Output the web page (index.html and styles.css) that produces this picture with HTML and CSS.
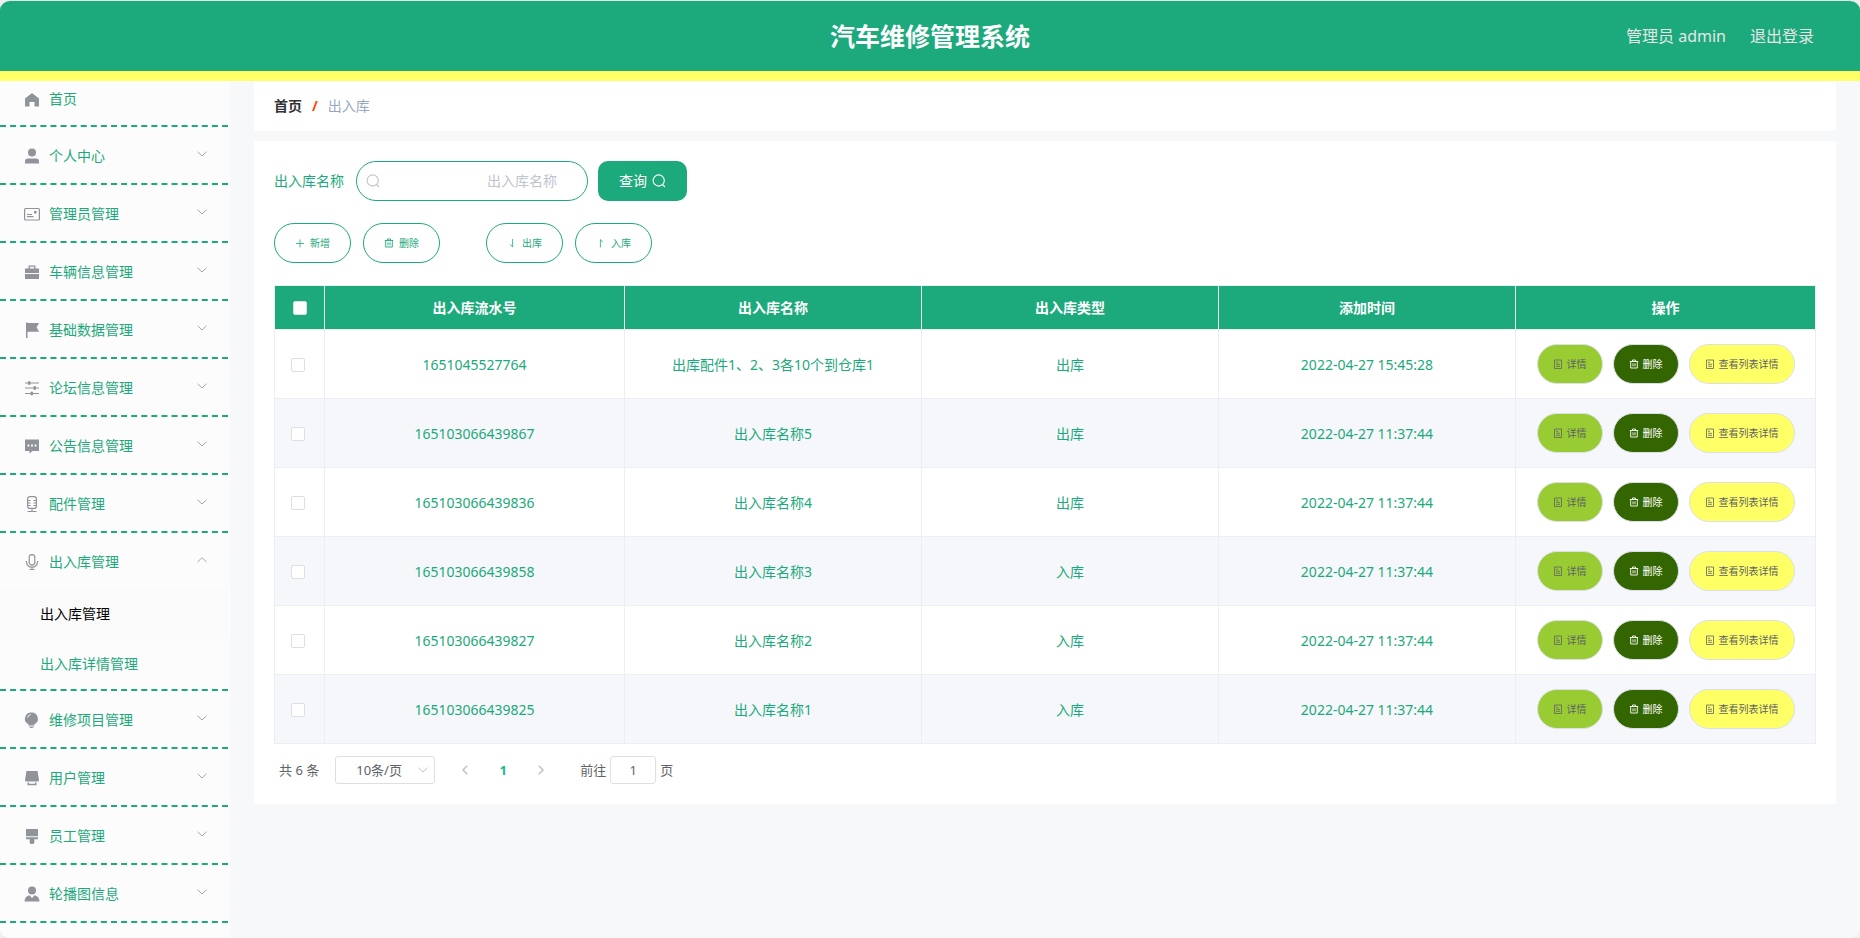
FILE: index.html
```html
<!DOCTYPE html>
<html lang="zh-CN">
<head>
<meta charset="utf-8">
<title>汽车维修管理系统</title>
<link rel="stylesheet" href="styles.css">
</head>
<body>
<svg class="sprite" aria-hidden="true">
  <symbol id="i-home" viewBox="0 0 18 18"><path fill="currentColor" d="M9 2l7 5.500v8h-4.500V11h-5v4.500H2v-8z"/></symbol>
  <symbol id="i-user" viewBox="0 0 18 18"><circle cx="9" cy="5.500" r="4" fill="currentColor"/><path fill="currentColor" d="M2 16.500v-2q0-3 3-3h8q3 0 3 3v2z"/></symbol>
  <symbol id="i-card" viewBox="0 0 18 18"><rect x="1.600" y="3.500" width="14.800" height="11.500" rx="1" fill="none" stroke="currentColor" stroke-width="1.200"/><path stroke="currentColor" stroke-width="1.200" d="M4 9.500h5M4 11.700h6.500"/><path fill="currentColor" d="M11 6h2.500v2.500H11z"/></symbol>
  <symbol id="i-case" viewBox="0 0 18 18"><path fill="currentColor" d="M2 5.500h3.500V2.500h7v3H16V10H2zM6.800 3.800v1.700h4.400V3.800zM2 11h14v5H2z" fill-rule="evenodd"/></symbol>
  <symbol id="i-flag" viewBox="0 0 18 18"><path fill="currentColor" d="M3 1.500h1.500V2H16l-2.300 4.200L16 10.800H4.500V17H3z"/></symbol>
  <symbol id="i-sliders" viewBox="0 0 18 18"><path fill="none" stroke="currentColor" stroke-width="1.200" d="M2 4h14M2 9h14M2 14.500h14"/><path fill="currentColor" d="M5 2.200h2.500v3.600H5zM10.500 7.200H13v3.600h-2.500zM7.500 12.700H10v3.600H7.500z"/></symbol>
  <symbol id="i-chat" viewBox="0 0 18 18"><path fill="currentColor" fill-rule="evenodd" d="M2 2.500h14v11.500H9.500l-3 2.500V14H2zM4.500 7.500v2h1.800v-2zM8.100 7.500v2h1.800v-2zM11.700 7.500v2h1.800v-2z"/></symbol>
  <symbol id="i-mic2" viewBox="0 0 18 18"><rect x="4.600" y="1.600" width="8.800" height="11.800" rx="2.200" fill="none" stroke="currentColor" stroke-width="1.200"/><path fill="none" stroke="currentColor" stroke-width="1.100" d="M4.600 5.500h3M10.400 5.500h3M4.600 8h3M10.400 8h3M4.600 10.500h3M10.400 10.500h3M9 13.500v3M4.500 16.500h9"/></symbol>
  <symbol id="i-mic" viewBox="0 0 18 18"><rect x="6.200" y="1.600" width="5.600" height="10.500" rx="2.800" fill="none" stroke="currentColor" stroke-width="1.200"/><path fill="none" stroke="currentColor" stroke-width="1.200" d="M3.500 8v1q.5 5.200 5.500 5.200T14.500 9V8M9 14v2.500M6.500 16.500h5"/></symbol>
  <symbol id="i-bulb" viewBox="0 0 18 18"><path fill="currentColor" d="M8.300 1.500A6.200 6.200 0 0 0 5.500 13.300V14.500h5.800v-1.200A6.200 6.200 0 0 0 8.300 1.500zM6 15.500h5v.7H10L9.500 17h-2L7 16.200H6z"/><path fill="none" stroke="#fcfcfc" d="M4.500 6.500q.8-2.300 3-3"/></symbol>
  <symbol id="i-goods" viewBox="0 0 18 18"><path fill="currentColor" d="M3.500 2h11L16 11q0 1.500-1.500 1.500h-11Q2 12.500 2 11zM4.500 13.500H6v1.300h6v-1.300h1.500v2.700h-9z"/></symbol>
  <symbol id="i-brush" viewBox="0 0 18 18"><path fill="currentColor" d="M3 2h12v7.200H3zM3 10.300h12v2H11.300V15.500q0 1.500-2.300 1.500t-2.300-1.500v-3.200H3z"/></symbol>
  <symbol id="i-custom" viewBox="0 0 18 18"><circle cx="9" cy="5.500" r="4" fill="currentColor"/><path fill="currentColor" d="M1.500 16.500q.3-5.500 5-6.300L9 13l2.500-2.800q4.700.8 5 6.300z"/></symbol>
  <symbol id="i-down" viewBox="0 0 12 12"><path fill="none" stroke="currentColor" d="M1.500 3.700L6 8l4.500-4.300"/></symbol>
  <symbol id="i-up" viewBox="0 0 12 12"><path fill="none" stroke="currentColor" d="M1.500 8L6 3.700 10.500 8"/></symbol>
  <symbol id="i-search" viewBox="0 0 14 14"><circle cx="6.700" cy="6.500" r="5.600" fill="none" stroke="currentColor" stroke-width="1.100"/><path stroke="currentColor" stroke-width="1.100" d="M10.500 10.500l2.500 2.500"/></symbol>
  <symbol id="i-plus" viewBox="0 0 10 10"><path stroke="currentColor" stroke-width=".8" d="M1 5.500h8M5 1.500v8"/></symbol>
  <symbol id="i-trash" viewBox="0 0 10 10"><path fill="none" stroke="currentColor" stroke-width=".9" d="M.8 2.500h8.400M3.500 2.500v-1.500h3v1.500M1.700 2.500v6.500h6.600V2.500M4 4.300v3M6 4.300v3"/></symbol>
  <symbol id="i-doc" viewBox="0 0 10 10"><path fill="none" stroke="currentColor" stroke-width=".8" d="M1.500 1h7v8.500h-7zM3 3.300h2M3 5.300h4M3 7.300h4"/></symbol>
  <symbol id="i-out" viewBox="0 0 10 10"><path fill="none" stroke="currentColor" stroke-width=".8" d="M5.600 1v8L3.200 6.300"/></symbol>
  <symbol id="i-in" viewBox="0 0 10 10"><path fill="none" stroke="currentColor" stroke-width=".8" d="M4.400 9.500v-8L6.800 4.200"/></symbol>
  <symbol id="i-left" viewBox="0 0 12 12"><path fill="none" stroke="currentColor" stroke-width="1.600" d="M8.300 1.800L4 6l4.300 4.200"/></symbol>
  <symbol id="i-right" viewBox="0 0 12 12"><path fill="none" stroke="currentColor" stroke-width="1.600" d="M3.700 1.800L8 6l-4.300 4.200"/></symbol>
</svg>

<div class="app">
  <header class="topbar">
    <h1 class="title">汽车维修管理系统</h1>
    <div class="account"><span>管理员 admin</span><a href="#">退出登录</a></div>
  </header>

  <div class="body">
    <nav class="sidebar">
      <ul class="menu">
        <li class="group first"><a class="item" href="#"><svg class="ico"><use href="#i-home"/></svg><span>首页</span></a></li>
        <li class="group"><a class="item" href="#"><svg class="ico"><use href="#i-user"/></svg><span>个人中心</span><svg class="arrow"><use href="#i-down"/></svg></a></li>
        <li class="group"><a class="item" href="#"><svg class="ico"><use href="#i-card"/></svg><span>管理员管理</span><svg class="arrow"><use href="#i-down"/></svg></a></li>
        <li class="group"><a class="item" href="#"><svg class="ico"><use href="#i-case"/></svg><span>车辆信息管理</span><svg class="arrow"><use href="#i-down"/></svg></a></li>
        <li class="group"><a class="item" href="#"><svg class="ico"><use href="#i-flag"/></svg><span>基础数据管理</span><svg class="arrow"><use href="#i-down"/></svg></a></li>
        <li class="group"><a class="item" href="#"><svg class="ico"><use href="#i-sliders"/></svg><span>论坛信息管理</span><svg class="arrow"><use href="#i-down"/></svg></a></li>
        <li class="group"><a class="item" href="#"><svg class="ico"><use href="#i-chat"/></svg><span>公告信息管理</span><svg class="arrow"><use href="#i-down"/></svg></a></li>
        <li class="group"><a class="item" href="#"><svg class="ico"><use href="#i-mic2"/></svg><span>配件管理</span><svg class="arrow"><use href="#i-down"/></svg></a></li>
        <li class="group"><a class="item" href="#"><svg class="ico"><use href="#i-mic"/></svg><span>出入库管理</span><svg class="arrow"><use href="#i-up"/></svg></a>
          <ul class="submenu">
            <li><a class="subitem active" href="#">出入库管理</a></li>
            <li><a class="subitem" href="#">出入库详情管理</a></li>
          </ul>
        </li>
        <li class="group"><a class="item" href="#"><svg class="ico"><use href="#i-bulb"/></svg><span>维修项目管理</span><svg class="arrow"><use href="#i-down"/></svg></a></li>
        <li class="group"><a class="item" href="#"><svg class="ico"><use href="#i-goods"/></svg><span>用户管理</span><svg class="arrow"><use href="#i-down"/></svg></a></li>
        <li class="group"><a class="item" href="#"><svg class="ico"><use href="#i-brush"/></svg><span>员工管理</span><svg class="arrow"><use href="#i-down"/></svg></a></li>
        <li class="group"><a class="item" href="#"><svg class="ico"><use href="#i-custom"/></svg><span>轮播图信息</span><svg class="arrow"><use href="#i-down"/></svg></a></li>
      </ul>
    </nav>

    <main class="main">
      <div class="crumbs"><a class="crumb-home" href="#">首页</a><span class="slash">/</span><span class="crumb-here">出入库</span></div>

      <section class="card">
        <form class="search">
          <label for="name">出入库名称</label>
          <div class="field"><svg class="field-ico"><use href="#i-search"/></svg><input id="name" class="text" type="text" placeholder="出入库名称"></div>
          <button class="query" type="button">查询<svg class="s14"><use href="#i-search"/></svg></button>
        </form>

        <div class="tools">
          <div class="toolset">
            <button class="tool" type="button"><svg class="s10"><use href="#i-plus"/></svg>新增</button>
            <button class="tool" type="button"><svg class="s10"><use href="#i-trash"/></svg>删除</button>
          </div>
          <div class="toolset">
            <button class="tool" type="button"><svg class="s10"><use href="#i-out"/></svg>出库</button>
            <button class="tool" type="button"><svg class="s10"><use href="#i-in"/></svg>入库</button>
          </div>
        </div>

        <table class="grid">
          <colgroup><col class="c-check"><col class="c-wide"><col><col><col><col class="c-wide"></colgroup>
          <thead>
            <tr><th><input class="check" type="checkbox" aria-label="全选"></th><th>出入库流水号</th><th>出入库名称</th><th>出入库类型</th><th>添加时间</th><th>操作</th></tr>
          </thead>
          <tbody>
            <tr><td class="pick"><input class="check" type="checkbox" aria-label="选择"></td><td>1651045527764</td><td>出库配件1、2、3各10个到仓库1</td><td>出库</td><td>2022-04-27 15:45:28</td><td class="act"><div class="ops"><button class="op detail" type="button"><svg class="s10"><use href="#i-doc"/></svg>详情</button><button class="op remove" type="button"><svg class="s10"><use href="#i-trash"/></svg>删除</button><button class="op list" type="button"><svg class="s10"><use href="#i-doc"/></svg>查看列表详情</button></div></td></tr>
            <tr><td class="pick"><input class="check" type="checkbox" aria-label="选择"></td><td>165103066439867</td><td>出入库名称5</td><td>出库</td><td>2022-04-27 11:37:44</td><td class="act"><div class="ops"><button class="op detail" type="button"><svg class="s10"><use href="#i-doc"/></svg>详情</button><button class="op remove" type="button"><svg class="s10"><use href="#i-trash"/></svg>删除</button><button class="op list" type="button"><svg class="s10"><use href="#i-doc"/></svg>查看列表详情</button></div></td></tr>
            <tr><td class="pick"><input class="check" type="checkbox" aria-label="选择"></td><td>165103066439836</td><td>出入库名称4</td><td>出库</td><td>2022-04-27 11:37:44</td><td class="act"><div class="ops"><button class="op detail" type="button"><svg class="s10"><use href="#i-doc"/></svg>详情</button><button class="op remove" type="button"><svg class="s10"><use href="#i-trash"/></svg>删除</button><button class="op list" type="button"><svg class="s10"><use href="#i-doc"/></svg>查看列表详情</button></div></td></tr>
            <tr><td class="pick"><input class="check" type="checkbox" aria-label="选择"></td><td>165103066439858</td><td>出入库名称3</td><td>入库</td><td>2022-04-27 11:37:44</td><td class="act"><div class="ops"><button class="op detail" type="button"><svg class="s10"><use href="#i-doc"/></svg>详情</button><button class="op remove" type="button"><svg class="s10"><use href="#i-trash"/></svg>删除</button><button class="op list" type="button"><svg class="s10"><use href="#i-doc"/></svg>查看列表详情</button></div></td></tr>
            <tr><td class="pick"><input class="check" type="checkbox" aria-label="选择"></td><td>165103066439827</td><td>出入库名称2</td><td>入库</td><td>2022-04-27 11:37:44</td><td class="act"><div class="ops"><button class="op detail" type="button"><svg class="s10"><use href="#i-doc"/></svg>详情</button><button class="op remove" type="button"><svg class="s10"><use href="#i-trash"/></svg>删除</button><button class="op list" type="button"><svg class="s10"><use href="#i-doc"/></svg>查看列表详情</button></div></td></tr>
            <tr><td class="pick"><input class="check" type="checkbox" aria-label="选择"></td><td>165103066439825</td><td>出入库名称1</td><td>入库</td><td>2022-04-27 11:37:44</td><td class="act"><div class="ops"><button class="op detail" type="button"><svg class="s10"><use href="#i-doc"/></svg>详情</button><button class="op remove" type="button"><svg class="s10"><use href="#i-trash"/></svg>删除</button><button class="op list" type="button"><svg class="s10"><use href="#i-doc"/></svg>查看列表详情</button></div></td></tr>
          </tbody>
        </table>

        <div class="pager">
          <span>共 6 条</span>
          <div class="size"><select class="size-select" aria-label="每页条数"><option>10条/页</option></select><svg class="size-arrow"><use href="#i-down"/></svg></div>
          <div class="pages">
            <button class="page" type="button" aria-label="上一页"><svg class="s12"><use href="#i-left"/></svg></button>
            <button class="page current" type="button">1</button>
            <button class="page" type="button" aria-label="下一页"><svg class="s12"><use href="#i-right"/></svg></button>
          </div>
          <div class="jump"><label for="goto">前往</label><input id="goto" class="goto" type="text" value="1"><span>页</span></div>
        </div>
      </section>
    </main>
  </div>
</div>
</body>
</html>
```
FILE: styles.css
```css
:root {
  --green: #1ca97b;
  --yellow: #ffff66;
  --line: #ebeef5;
  --edge: #dcdfe6;
}

* { box-sizing: border-box; }

body {
  margin: 0;
  background: #f0f0f0;
  font-family: "Noto Sans", "Noto Sans CJK SC", sans-serif;
  font-size: 14px;
  line-height: 20px;
  color: var(--green);
}

a { color: inherit; text-decoration: none; }
ul { margin: 0; padding: 0; list-style: none; }
button, input, select { font: inherit; color: inherit; margin: 0; }
button { cursor: pointer; }
svg { display: block; flex: none; }

.sprite { position: absolute; width: 0; height: 0; }
.s10 { width: 10px; height: 10px; }
.s12 { width: 12px; height: 12px; }
.s14 { width: 14px; height: 14px; }

.app {
  display: flex;
  flex-direction: column;
  min-height: 100vh;
  border-top: 1px solid #dfe8e4;
  border-radius: 10px;
  overflow: hidden;
  background: #f7f8fa;
}

.topbar {
  display: grid;
  grid-template-columns: 1fr auto 1fr;
  align-items: center;
  height: 80px;
  padding: 0 46px;
  background: var(--green);
  border-bottom: 10px solid var(--yellow);
}
.title {
  grid-column: 2;
  margin: 0;
  font-size: 25px;
  line-height: 40px;
  font-weight: 700;
  color: #fff;
}
.account {
  display: flex;
  justify-content: flex-end;
  gap: 24px;
  font-size: 16px;
  color: #e6e6e6;
}

.body { display: flex; flex: 1; }

.sidebar {
  flex: none;
  width: 230px;
  padding-right: 2px;
  background: #fcfcfc;
}
.group { border-bottom: 2px dashed var(--green); }
.item {
  display: flex;
  align-items: center;
  height: 56px;
  padding: 2px 20px 0 23px;
}
.first .item { height: 44px; padding-top: 0; padding-bottom: 8px; }
.first .ico { margin-top: 2px; }
.ico { width: 18px; height: 18px; margin-right: 8px; color: #909399; }
.arrow { width: 12px; height: 12px; margin: 0 0 4px auto; color: #aaa6a8; }
.subitem {
  display: block;
  padding-left: 40px;
  line-height: 50px;
}
.subitem.active { color: #000; background: #fafafa; }

.main { flex: 1; min-width: 0; padding: 0 24px; }

.crumbs {
  display: flex;
  align-items: center;
  gap: 10px;
  height: 50px;
  padding: 0 20px;
  background: #fff;
  border-radius: 0 0 4px 4px;
}
.crumb-home { font-weight: 700; color: #303133; }
.slash { font-weight: 700; color: #ff4500; }
.crumb-here { color: #97a8be; }

.card {
  margin-top: 10px;
  padding: 20px;
  background: #fff;
}

.search { display: flex; align-items: center; }
.field { position: relative; margin: 0 10px 0 12px; }
.field-ico {
  position: absolute;
  left: 10px;
  top: 13px;
  width: 14px;
  height: 14px;
  color: #c0c4cc;
}
.text {
  display: block;
  width: 232px;
  height: 40px;
  padding: 0 30px 2px;
  border: 1px solid var(--green);
  border-radius: 20px;
  background: #fff;
  text-align: right;
  outline: 0;
}
.text::placeholder { color: #c0c4cc; opacity: 1; }
.query {
  display: flex;
  align-items: center;
  gap: 5px;
  height: 40px;
  padding: 0 21px;
  border: 0;
  border-radius: 10px;
  background: var(--green);
  color: #fff;
}

.tools { display: flex; gap: 46px; margin: 22px 0; }
.toolset { display: flex; gap: 12px; }
.tool {
  display: flex;
  align-items: center;
  gap: 5px;
  height: 40px;
  padding: 0 20px;
  border: 1px solid var(--green);
  border-radius: 20px;
  background: #fff;
  font-size: 10px;
}

.grid {
  width: 100%;
  table-layout: fixed;
  border-collapse: collapse;
  text-align: center;
}
.c-check { width: 50px; }
.c-wide { width: 300px; }
.grid th, .grid td { padding: 0; border: 1px solid var(--line); }
.grid th { height: 44px; background: var(--green); color: #fff; font-weight: 700; }
.grid td { height: 69px; padding-top: 2px; }
.grid tbody tr:nth-child(even) { background: #f5f7fa; }
.grid .pick { padding-right: 3px; }
.grid .act { padding-top: 0; }
.check {
  display: block;
  appearance: none;
  width: 14px;
  height: 14px;
  margin: 0 auto;
  border: 1px solid var(--edge);
  border-radius: 2px;
  background: #fff;
}

.ops { display: flex; justify-content: center; gap: 10px; }
.op {
  display: flex;
  align-items: center;
  gap: 4px;
  height: 40px;
  padding: 0 15px;
  border: 1px solid var(--edge);
  border-radius: 20px;
  font-size: 10px;
  color: #606266;
}
.detail { background: #99cc33; }
.remove { background: #336600; color: #fff; }
.list { background: var(--yellow); }

.pager {
  display: flex;
  align-items: center;
  margin-top: 12px;
  padding-left: 5px;
  font-size: 13px;
  color: #606266;
}
.size { position: relative; margin-left: 16px; }
.size-select {
  display: block;
  appearance: none;
  width: 100px;
  height: 28px;
  padding: 0 24px 0 20px;
  border: 1px solid var(--edge);
  border-radius: 3px;
  background: #fff;
}
.size-arrow {
  position: absolute;
  right: 6px;
  top: 8px;
  width: 12px;
  height: 12px;
  color: #c0c4cc;
  pointer-events: none;
}
.pages { display: flex; margin-left: 11px; }
.page {
  display: flex;
  align-items: center;
  justify-content: center;
  width: 38px;
  height: 28px;
  padding: 0;
  border: 0;
  background: none;
  color: #c0c4cc;
}
.page.current { font-weight: 700; color: #15bb8b; }
.jump { display: flex; align-items: center; gap: 4px; margin-left: 20px; }
.goto {
  width: 46px;
  height: 28px;
  padding: 0;
  border: 1px solid var(--edge);
  border-radius: 3px;
  background: #fff;
  text-align: center;
}
```
